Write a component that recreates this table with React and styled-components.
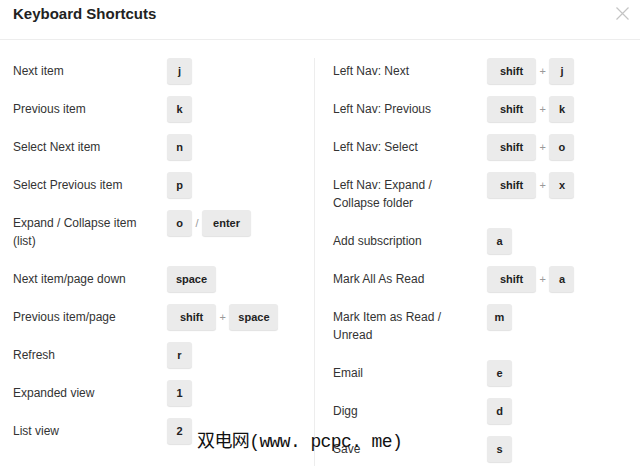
import React from 'react'
import styled, { createGlobalStyle } from 'styled-components'

const GlobalStyle = createGlobalStyle`
    html, body {
        margin: 0;
        padding: 0;
        background: #fff;
    }
    body {
        font-family: "Liberation Sans", Arial, Helvetica, sans-serif;
        color: #333;
    }
`

const left = [
    { label: 'Next item', keys: ['j'] },
    { label: 'Previous item', keys: ['k'] },
    { label: 'Select Next item', keys: ['n'] },
    { label: 'Select Previous item', keys: ['p'] },
    { label: 'Expand / Collapse item (list)', keys: ['o', '/', 'enter'] },
    { label: 'Next item/page down', keys: ['space'] },
    { label: 'Previous item/page', keys: ['shift', '+', 'space'] },
    { label: 'Refresh', keys: ['r'] },
    { label: 'Expanded view', keys: ['1'] },
    { label: 'List view', keys: ['2'] },
]

const right = [
    { label: 'Left Nav: Next', keys: ['shift', '+', 'j'] },
    { label: 'Left Nav: Previous', keys: ['shift', '+', 'k'] },
    { label: 'Left Nav: Select', keys: ['shift', '+', 'o'] },
    { label: 'Left Nav: Expand / Collapse folder', keys: ['shift', '+', 'x'] },
    { label: 'Add subscription', keys: ['a'] },
    { label: 'Mark All As Read', keys: ['shift', '+', 'a'] },
    { label: 'Mark Item as Read / Unread', keys: ['m'] },
    { label: 'Email', keys: ['e'] },
    { label: 'Digg', keys: ['d'] },
    { label: 'Save', keys: ['s'] },
]

function CloseIcon() {
    return (
        <svg width="13" height="13" viewBox="0 0 13 13">
            <path d="M0.5 0.5 L12.5 12.5 M12.5 0.5 L0.5 12.5" stroke="#c4c4c4" strokeWidth="1.2" fill="none" />
        </svg>
    )
}

function ShortcutRow({ label, keys }) {
    return (
        <Row>
            <Label>{label}</Label>
            <Keys>
                {keys.map((k, i) =>
                    k === '+' || k === '/'
                        ? <Sep key={i}>{k}</Sep>
                        : <Key key={i} wide={k.length > 1 ? 1 : 0}>{k}</Key>
                )}
            </Keys>
        </Row>
    )
}

export default function App() {
    return (
        <Dialog>
            <GlobalStyle />
            <Header>
                <Title>Keyboard Shortcuts</Title>
                <CloseButton><CloseIcon /></CloseButton>
            </Header>
            <Body>
                <Column first>
                    {left.map(r => <ShortcutRow key={r.label} {...r} />)}
                </Column>
                <Column>
                    {right.map(r => <ShortcutRow key={r.label} {...r} />)}
                </Column>
            </Body>
            <Watermark>双电网(www. pcpc. me)</Watermark>
        </Dialog>
    )
}

const Dialog = styled.div`
    position: relative;
    width: 640px;
    height: 466px;
    overflow: hidden;
    background: #fff;
`

const Header = styled.div`
    height: 39px;
    border-bottom: 1px solid #ededed;
    display: flex;
    align-items: flex-start;
    justify-content: space-between;
    padding: 0 11px 0 13px;
    box-sizing: content-box;
`

const Title = styled.h1`
    margin: 5px 0 0;
    font-size: 15px;
    line-height: 18px;
    font-weight: bold;
    color: #222;
`

const CloseButton = styled.div`
    margin-top: 7px;
    width: 13px;
    height: 13px;
    display: flex;
`

const Body = styled.div`
    display: flex;
    padding-top: 18px;
`

const Column = styled.div`
    box-sizing: border-box;
    width: ${p => (p.first ? '315px' : '325px')};
    padding-left: ${p => (p.first ? '13px' : '18px')};
    border-right: ${p => (p.first ? '1px solid #ededed' : 'none')};
`

const Row = styled.div`
    display: flex;
    align-items: flex-start;
    margin-bottom: 12px;
`

const Label = styled.div`
    flex: none;
    width: 140px;
    padding: 4px 14px 4px 0;
    font-size: 12px;
    line-height: 18px;
    color: #333;
`

const Keys = styled.div`
    display: flex;
    align-items: center;
    height: 26px;
`

const Key = styled.span`
    box-sizing: border-box;
    width: ${p => (p.wide ? '49px' : '25px')};
    height: 26px;
    display: flex;
    align-items: center;
    justify-content: center;
    background: #ebebeb;
    border-radius: 3px;
    box-shadow: 0 1px 1px rgba(0, 0, 0, 0.12);
    font-size: 11px;
    font-weight: bold;
    color: #222;
`

const Sep = styled.span`
    margin: 0 3.5px;
    font-size: 11px;
    color: #999;
`

const Watermark = styled.div`
    position: absolute;
    left: 197px;
    top: 431px;
    font-family: "Liberation Mono", "Noto Sans CJK SC", monospace;
    font-size: 18px;
    line-height: 22px;
    color: #111;
    letter-spacing: -0.6px;
    white-space: nowrap;
`
